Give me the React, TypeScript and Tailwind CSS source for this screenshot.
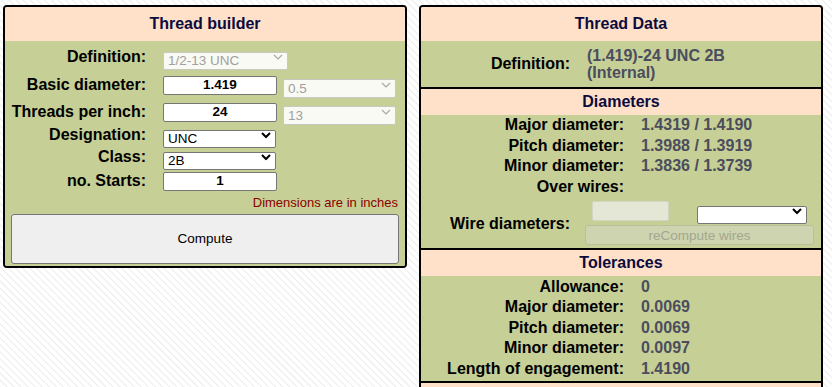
import React from "react";

const peach = "bg-[#ffe0c9]";
const green = "bg-[#c6cf95]";

const Chevron = ({ disabled }: { disabled?: boolean }) => (
    <svg
        className="pointer-events-none absolute right-[5px] top-1/2 -translate-y-1/2"
        width="10"
        height="7"
        viewBox="0 0 10 7"
    >
        <path
            d="M1 1.5l4 4 4-4"
            fill="none"
            stroke={disabled ? "#a8a8a8" : "#000"}
            strokeWidth={disabled ? 1.2 : 2}
        />
    </svg>
);

const Select = ({
    value,
    className,
    disabled,
}: {
    value: string;
    className: string;
    disabled?: boolean;
}) => (
    <div className={`relative ${className}`}>
        <select
            disabled={disabled}
            defaultValue={value}
            className={`h-full w-full appearance-none rounded-[2px] border pl-[4px] text-[13.5px] leading-none ${
                disabled
                    ? "border-[#c9c9c2] bg-[#f9faf3] text-[#a0a0a0]"
                    : "border-[#767676] bg-white text-black"
            }`}
        >
            <option value={value}>{value}</option>
        </select>
        <Chevron disabled={disabled} />
    </div>
);

const Input = ({ value }: { value: string }) => (
    <input
        readOnly
        value={value}
        className="h-[19px] w-[114px] rounded-[2px] border border-[#767676] bg-white text-center text-[13.5px] font-bold text-black"
    />
);

const LeftRow = ({
    label,
    className,
    children,
}: {
    label: string;
    className: string;
    children: React.ReactNode;
}) => (
    <div className={`flex h-[20px] items-center ${className}`}>
        <div className="w-[141px] text-right text-[16px] font-bold">{label}</div>
        <div className="ml-[17px] flex items-center">{children}</div>
    </div>
);

const ThreadBuilder = () => (
    <div className="w-[404px] overflow-hidden rounded-[4px] border-2 border-black">
        <div
            className={`flex h-[34px] items-center justify-center text-[16px] font-bold text-[#0b0b3d] ${peach}`}
        >
            Thread builder
        </div>
        <div className={`pb-[2px] pt-[6px] ${green}`}>
            <LeftRow label="Definition:" className="">
                <Select value="1/2-13 UNC" className="h-[18px] w-[125px]" disabled />
            </LeftRow>
            <LeftRow label="Basic diameter:" className="mt-[8px]">
                <Input value="1.419" />
                <Select value="0.5" className="ml-[6px] h-[19px] w-[113px]" disabled />
            </LeftRow>
            <LeftRow label="Threads per inch:" className="mt-[7px]">
                <Input value="24" />
                <Select value="13" className="ml-[6px] h-[19px] w-[113px]" disabled />
            </LeftRow>
            <LeftRow label="Designation:" className="mt-[3px]">
                <Select value="UNC" className="h-[18px] w-[113px]" />
            </LeftRow>
            <LeftRow label="Class:" className="mt-[2px]">
                <Select value="2B" className="h-[18px] w-[113px]" />
            </LeftRow>
            <LeftRow label="no. Starts:" className="mt-[4px]">
                <Input value="1" />
            </LeftRow>
            <div className="mt-[4px] pr-[7px] text-right text-[13px] leading-[16px] text-[#8b0000]">
                Dimensions are in inches
            </div>
            <div className="mt-[3px] px-[6px]">
                <button className="h-[50px] w-full rounded-[3px] border border-[#767676] bg-[#efefef] text-[13.5px] text-black">
                    Compute
                </button>
            </div>
        </div>
    </div>
);

const SectionHead = ({ title }: { title: string }) => (
    <div
        className={`flex h-[28px] items-center justify-center border-t-2 border-black text-[16px] font-bold text-[#0b0b3d] ${peach}`}
    >
        {title}
    </div>
);

const DataRow = ({ label, value }: { label: string; value?: string }) => (
    <div className="flex h-[20.6px] items-center text-[16px] font-bold">
        <div className="w-[203px] text-right">{label}</div>
        <div className="ml-[17px] text-[#4b4d5e]">{value}</div>
    </div>
);

const ThreadData = () => (
    <div className="w-[404px] overflow-hidden rounded-t-[4px] border-2 border-b-0 border-black">
        <div
            className={`flex h-[34px] items-center justify-center text-[16px] font-bold text-[#0b0b3d] ${peach}`}
        >
            Thread Data
        </div>
        <div className={`flex h-[46px] items-center text-[16px] font-bold ${green}`}>
            <div className="w-[149px] text-right">Definition:</div>
            <div className="ml-[17px] leading-[17px] text-[#4b4d5e]">
                <div>(1.419)-24 UNC 2B</div>
                <div>(Internal)</div>
            </div>
        </div>

        <SectionHead title="Diameters" />
        <div className={green}>
            <DataRow label="Major diameter:" value="1.4319 / 1.4190" />
            <DataRow label="Pitch diameter:" value="1.3988 / 1.3919" />
            <DataRow label="Minor diameter:" value="1.3836 / 1.3739" />
            <DataRow label="Over wires:" />
            <div className="flex h-[51px] items-center">
                <div className="w-[149px] pt-[2px] text-right text-[16px] font-bold">
                    Wire diameters:
                </div>
                <div className="ml-[15px] flex flex-col">
                    <div className="flex items-center">
                        <input
                            disabled
                            className="ml-[7px] h-[20px] w-[77px] rounded-[2px] border border-[#d3d6c2] bg-[#e5e7d6]"
                        />
                        <Select value="" className="ml-[28px] h-[18px] w-[110px]" />
                    </div>
                    <button
                        disabled
                        className="mt-[4px] h-[20px] w-[229px] rounded-[3px] border border-[#b9bf9c] bg-[#ced4b0] text-[13.5px] text-[#a3a78f]"
                    >
                        reCompute wires
                    </button>
                </div>
            </div>
        </div>

        <SectionHead title="Tolerances" />
        <div className={`pb-[2px] ${green}`}>
            <DataRow label="Allowance:" value="0" />
            <DataRow label="Major diameter:" value="0.0069" />
            <DataRow label="Pitch diameter:" value="0.0069" />
            <DataRow label="Minor diameter:" value="0.0097" />
            <DataRow label="Length of engagement:" value="1.4190" />
        </div>
        <div className={`h-[40px] border-t-2 border-black ${peach}`}></div>
    </div>
);

export default function App() {
    return (
        <div className="min-h-screen w-full bg-[repeating-linear-gradient(45deg,#ffffff_0px,#ffffff_3px,#ececec_4px,#ffffff_5px)] font-['Liberation_Sans',Arial,sans-serif] text-black">
            <div className="flex items-start gap-[12px] pl-[3px] pt-[5px]">
                <ThreadBuilder />
                <ThreadData />
            </div>
        </div>
    );
}
